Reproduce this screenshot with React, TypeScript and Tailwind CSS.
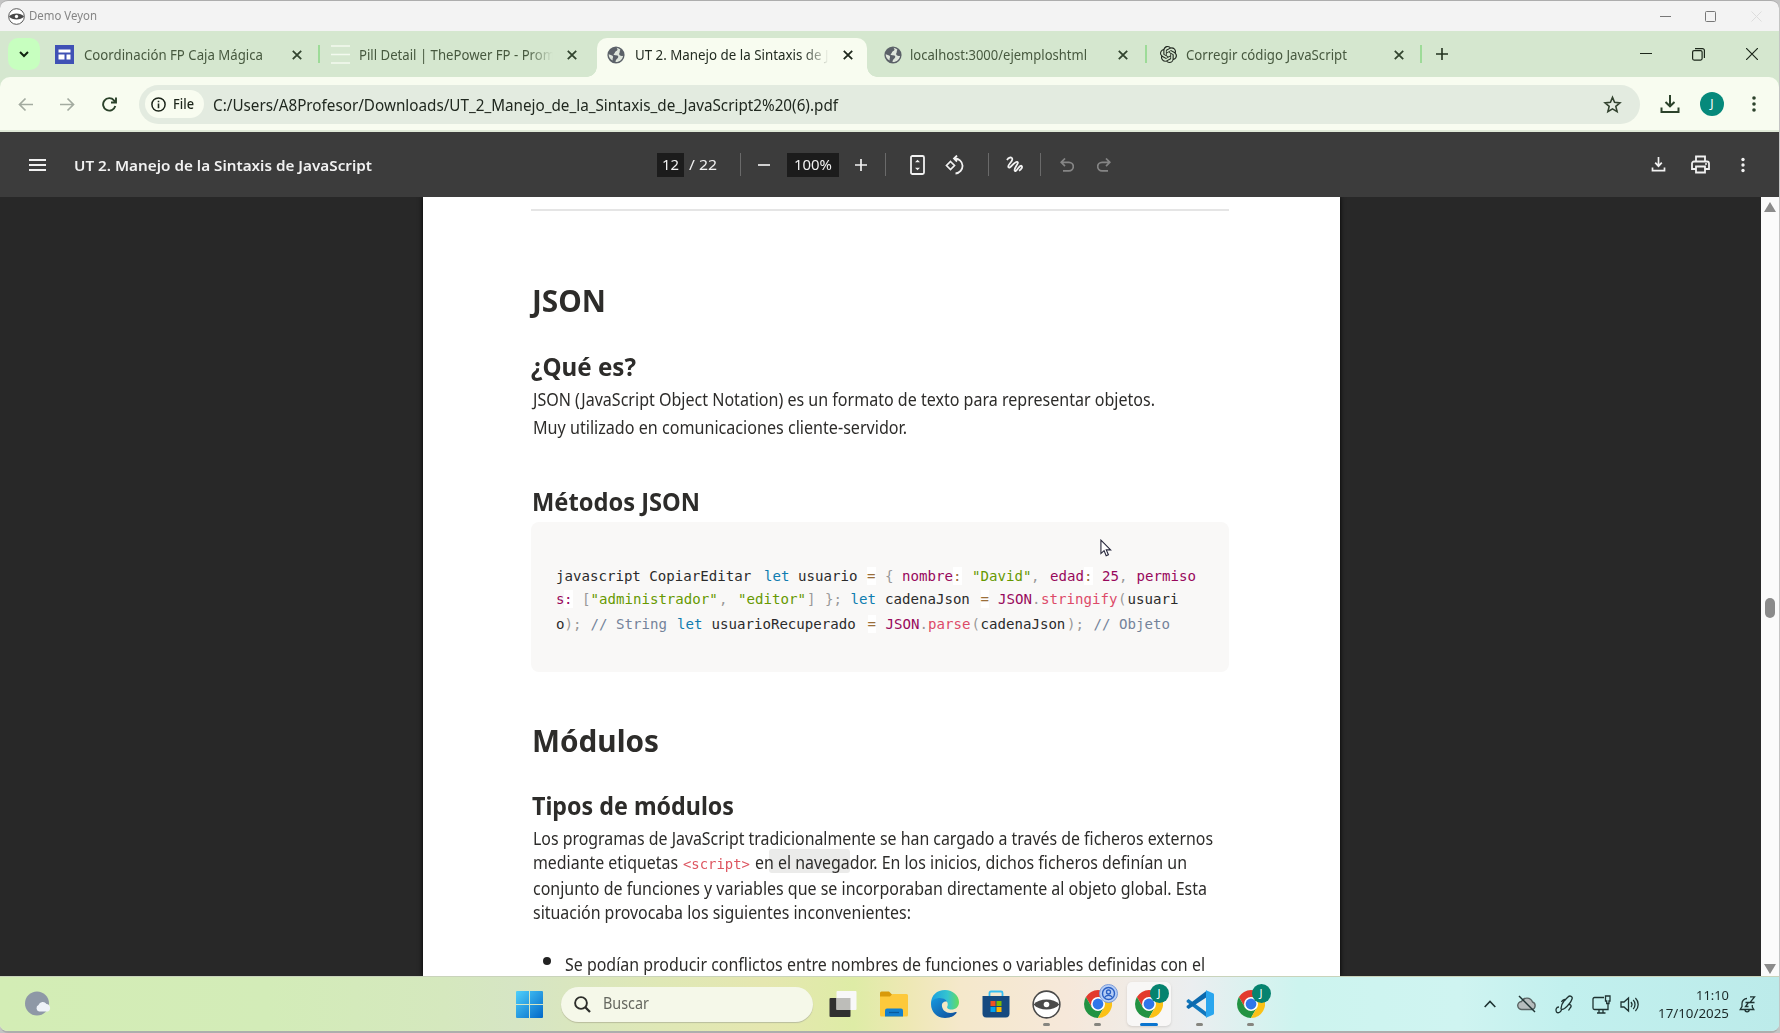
import React, { useLayoutEffect, useRef, useState } from "react";
import { SiOpenai } from "react-icons/si";

type FitProps = { w: number; className?: string; children: React.ReactNode };

/** One line of text stretched or condensed horizontally to a given width. */
function Fit({ w, className = "", children }: FitProps) {
  const ref = useRef<HTMLSpanElement>(null);
  const [k, setK] = useState(1);
  useLayoutEffect(() => {
    if (ref.current && ref.current.offsetWidth) {
      const r = document.createRange();
      r.selectNodeContents(ref.current);
      setK((w / r.getBoundingClientRect().width) * k);
    }
  }, [w]);
  return (
    <span className={`inline-block shrink-0 whitespace-nowrap ${className}`} style={{ width: w }}>
      <span ref={ref} className="inline-block origin-left" style={{ transform: `scaleX(${k})` }}>
        {children}
      </span>
    </span>
  );
}

type IconProps = { className?: string; children: React.ReactNode; box?: string };
function Svg({ className = "size-6", children, box = "0 0 24 24" }: IconProps) {
  return (
    <svg viewBox={box} className={`shrink-0 ${className}`} fill="none" stroke="currentColor" strokeWidth="2">
      {children}
    </svg>
  );
}

const Globe = () => (
  <Svg className="size-[18px]" box="0 0 18 18">
    <circle cx="9" cy="9" r="8.6" fill="#5b6168" stroke="none" />
    <path
      d="M9.500 1.800C11 3 10.800 4.600 9 5.200 7.500 5.700 8.300 7.200 7 7.800 6 8.300 7 9.300 8.500 9.200c2.500-.2 3.500 1.200 2.300 2.900-.9 1.200-2.200 1.700-2.300 3.900 4 .2 7.200-2.600 7.600-6.300-1.800.5-3.600 0-3.900-1.400-.3-1.300.8-1.700.6-2.900-.2-1.100 1-1.300.6-1.700-1.100-1-2.400-1.700-3.900-1.900ZM1.700 8.200c1.700.6 4.200 1 4.400 2.600.1 1.300-1 1.500-.3 3.800C3.300 13.400 1.500 11.200 1.700 8.200Z"
      fill="#dfe6dc"
      stroke="none"
    />
  </Svg>
);

const Veyon = ({ className }: { className: string }) => (
  <Svg className={className} box="0 0 28 28">
    <circle cx="14" cy="14" r="12.900" fill="#fff" stroke="#4a4a4a" strokeWidth="1.500" />
    <path d="M1.500 14C7 7.600 21 7.600 26.500 14 21 20.400 7 20.400 1.500 14Z" fill="#4a4a4a" stroke="none" />
    <circle cx="14" cy="14" r="2.700" fill="#fff" stroke="none" />
  </Svg>
);

const Cross = ({ className = "text-[#32452f]" }: { className?: string }) => (
  <Svg className={`size-[10px] ${className}`} box="0 0 10 10">
    <path d="M.8.800 9.200 9.200M9.200.800.8 9.200" strokeWidth="1.800" />
  </Svg>
);

const Chrome = () => (
  <Svg className="size-7" box="0 0 28 28">
    <g stroke="none">
      <path d="M8 17.500 1.900 7A14 14 0 0 1 26.100 7H14Z" fill="#e33b2e" />
      <path d="M8 17.500 1.900 7a14 14 0 0 0 12 21l6-10.500Z" fill="#229342" />
      <path d="M14 7h12.100A14 14 0 0 1 13.900 28l6.100-10.500Z" fill="#fbc116" />
      <circle cx="14" cy="14" r="7" fill="#fff" />
      <circle cx="14" cy="14" r="5.400" fill="#2f76ea" />
    </g>
  </Svg>
);

type TabProps = { icon: React.ReactNode; title: string; w: number; active?: boolean; sep?: boolean; fade?: boolean };
function Tab({ icon, title, w, active, sep, fade }: TabProps) {
  return (
    <div className="relative flex h-[46px] w-[275.5px] shrink-0 items-center pt-px pl-3">
      {active && (
        <div className="absolute top-[7px] left-[2.500px] h-[39px] w-[270px] rounded-t-[10px] bg-[#f8fcf0]">
          <div className="absolute bottom-0 -left-2.5 size-2.5 bg-[radial-gradient(circle_at_0_0,#d5e7cf_9.500px,#f8fcf0_10px)]" />
          <div className="absolute -right-2.5 bottom-0 size-2.5 bg-[radial-gradient(circle_at_100%_0,#d5e7cf_9.500px,#f8fcf0_10px)]" />
        </div>
      )}
      <div className="relative flex w-7 shrink-0 items-center">{icon}</div>
      <div
        className={`relative w-[196px] overflow-hidden text-[13.500px] leading-6 ${active ? "text-[#222b20]" : "text-[#47593f]"} ${fade ? "[mask-image:linear-gradient(to_right,#000_168px,transparent_194px)]" : ""}`}
      >
        <Fit w={w}>{title}</Fit>
      </div>
      <div className="relative ml-3 flex">
        <Cross className={active ? "text-[#1f281d]" : "text-[#32452f]"} />
      </div>
      {sep && <div className="absolute top-[14px] right-[-1px] h-[18px] w-0.5 bg-[#9ddb98]" />}
    </div>
  );
}

type Seg = [text: string, color: string, x: number, marked?: boolean];
const INK = "text-[#2b2b2b]";
const KEY = "text-[#0f7db0]";
const PROP = "text-[#98085c]";
const STR = "text-[#669900]";
const PUN = "text-[#999999]";
const FN = "text-[#dd4a68]";
const COM = "text-[#74839a]";
const OP = "text-[#9a6e3a]";

const CODE: Seg[][] = [
  [
    ["javascript CopiarEditar", INK, 0],
    ["let", KEY, 208],
    ["usuario", INK, 242],
    ["=", OP, 311, true],
    ["{", PUN, 329],
    ["nombre", PROP, 346],
    [":", OP, 397, true],
    ['"David"', STR, 416],
    [",", PUN, 475],
    ["edad", PROP, 494],
    [":", OP, 528, true],
    ["25", PROP, 546],
    [",", PUN, 563],
    ["permiso", PROP, 580.5],
  ],
  [
    ["s", PROP, 0],
    [":", PROP, 8, true],
    ["[", PUN, 26],
    ['"administrador"', STR, 34.5],
    [",", PUN, 163],
    ['"editor"', STR, 182],
    ["]", PUN, 251],
    ["};", PUN, 269],
    ["let", KEY, 294.5],
    ["cadenaJson", INK, 329],
    ["=", OP, 424.5, true],
    ["JSON", PROP, 442],
    [".", PUN, 476],
    ["stringify", FN, 485],
    ["(", PUN, 562],
    ["usuari", INK, 571.5],
  ],
  [
    ["o", INK, 0],
    [");", PUN, 8.5],
    ["// String", COM, 34.5],
    ["let", KEY, 121],
    ["usuarioRecuperado", INK, 155.5],
    ["=", OP, 311.5, true],
    ["JSON", PROP, 329.5],
    [".", PUN, 363.5],
    ["parse", FN, 372],
    ["(", PUN, 415.5],
    ["cadenaJson", INK, 424.5],
    [");", PUN, 511],
    ["// Objeto", COM, 537.5],
  ],
];

function CodeLine({ segs }: { segs: Seg[] }) {
  return (
    <div className="flex h-[21px] items-center whitespace-pre">
      {segs.map(([text, color, x, marked], i) => (
        <span key={i} className={`shrink-0 ${color}`} style={{ width: (segs[i + 1]?.[2] ?? x + 80) - x }}>
          {marked ? <span className="inline-block h-[18px] bg-white leading-[18px]">{text}</span> : text}
        </span>
      ))}
    </div>
  );
}

const H1 = "flex h-10 items-center text-[31px] leading-10 font-bold";
const H2 = "flex h-8 items-center text-[25px] leading-8 font-bold";
const Divider = ({ className }: { className: string }) => <div className={`h-[23px] w-px shrink-0 bg-[#6a6a6a] ${className}`} />;

function TaskIcon({ children, state }: { children: React.ReactNode; state?: "open" | "active" }) {
  return (
    <div
      className={`relative mx-[3.500px] flex h-11 w-11 items-center justify-center rounded-[5px] ${state === "active" ? "bg-[#f8f7f6] shadow-sm" : ""}`}
    >
      {children}
      {state === "open" && <div className="absolute bottom-0 h-[3.500px] w-[7px] rounded-full bg-[#86857f]" />}
      {state === "active" && <div className="absolute bottom-0 h-[3.500px] w-[18px] rounded-full bg-[#0a74cf]" />}
    </div>
  );
}

const JBadge = () => (
  <div className="absolute top-[2px] right-0.5 flex size-[19px] items-center justify-center rounded-full bg-[#06836f] text-[11px] text-white">
    J
  </div>
);

export default function App() {
  return (
    <div className="h-[1033px] w-[1780px] overflow-hidden bg-[#c4c4c4] font-['Noto_Sans',sans-serif]">
      <div className="flex h-[1033px] w-[1779px] flex-col overflow-hidden rounded-lg border-t border-b-2 border-[#adadad] bg-[#f3f3f3]">
        {/* Outer window title */}
        <div className="flex h-[30px] shrink-0 items-center pl-2 text-[12px] text-[#858585]">
          <Veyon className="size-[17px]" />
          <Fit w={68} className="ml-1">Demo Veyon</Fit>
          <div className="ml-auto flex items-center pr-[17px] text-[#777]">
            <Svg className="size-[11px]" box="0 0 11 11"><path d="M0 5.500H11" strokeWidth="1" /></Svg>
            <Svg className="ml-[34px] size-[11px]" box="0 0 11 11"><rect x=".5" y=".5" width="10" height="10" rx="1" strokeWidth="1" /></Svg>
            <Svg className="ml-[35px] size-[11px] text-[#ddd]" box="0 0 11 11"><path d="M.5.500l10 10M10.500.500l-10 10" strokeWidth="1" /></Svg>
          </div>
        </div>

        {/* Tab strip */}
        <div className="flex h-[46px] shrink-0 items-center bg-[#d5e7cf]">
          <div className="mr-[3.500px] ml-2 flex h-8 w-8 items-center justify-center rounded-[10px] bg-[#c7ffbf]">
            <Svg className="size-[10px] text-[#10240f]" box="0 0 10 10"><path d="M1 3l4 4 4-4" strokeWidth="2" /></Svg>
          </div>
          <Tab
            title="Coordinación FP Caja Mágica"
            w={179}
            sep
            icon={
              <Svg className="-ml-px size-[19px]" box="0 0 19 19">
                <rect width="19" height="19" fill="#3f51b5" stroke="none" />
                <path d="M3.500 4.500h12v3h-12zM3.500 9.500h6v5h-6zM11.500 9.500h4v5h-4z" fill="#fff" stroke="none" />
              </Svg>
            }
          />
          <Tab
            title="Pill Detail | ThePower FP - Promo"
            w={204}
            fade
            icon={<Svg className="size-[19px] text-[#f3faef]" box="0 0 19 19"><path d="M0 1H19M0 9.500H19M0 18H19" strokeWidth="1.300" /></Svg>}
          />
          <Tab title="UT 2. Manejo de la Sintaxis de JavaScript" w={251} fade active icon={<Globe />} />
          <Tab title="localhost:3000/ejemploshtml" w={177} sep icon={<div className="ml-0.5"><Globe /></div>} />
          <Tab title="Corregir código JavaScript" w={161} sep icon={<SiOpenai className="ml-0.5 size-[17px] text-[#20281f]" />} />
          <Svg className="ml-[15px] size-3 text-[#22331f]" box="0 0 12 12"><path d="M6 0V12M0 6H12" strokeWidth="1.600" /></Svg>
          <div className="ml-auto flex items-center pr-[21px] text-[#1d281b]">
            <Svg className="size-3" box="0 0 12 12"><path d="M0 5.500H12" strokeWidth="1.200" /></Svg>
            <Svg className="ml-[40px] size-[13px]" box="0 0 13 13">
              <rect x=".6" y="2.600" width="9.500" height="9.500" rx="1.500" strokeWidth="1.200" />
              <path d="M3 .600h7.400a2 2 0 0 1 2 2V10" strokeWidth="1.200" />
            </Svg>
            <Svg className="ml-[41px] size-3" box="0 0 12 12"><path d="M0 0 12 12M12 0 0 12" strokeWidth="1.200" /></Svg>
          </div>
        </div>

        {/* Address bar */}
        <div className="h-[55px] shrink-0 bg-[#d5e7cf]">
          <div className="flex h-[55px] items-center rounded-t-[10px] border-b-2 border-[#e0ead8] bg-[#f8fcf0] pt-px">
            <Svg className="ml-[18px] size-[15px] text-[#a3aba0]" box="0 0 15 15"><path d="M15 7.500H1.500M7.500 1.500 1.500 7.500 7.500 13.500" strokeWidth="1.700" /></Svg>
            <Svg className="ml-[27px] size-[15px] text-[#a3aba0]" box="0 0 15 15"><path d="M0 7.500H13.500M7.500 1.500l6 6L7.500 13.500" strokeWidth="1.700" /></Svg>
            <Svg className="ml-[27px] size-[15px] text-[#2b422a]" box="0 0 15 15"><path d="M13.300 9A6.200 6.200 0 1 1 12 3.300L14 5.500M14 .5V5.500H9" strokeWidth="1.900" /></Svg>
            <div className="ml-[22px] flex h-[39px] w-[1501px] items-center rounded-full bg-[#e3ebe0] pl-1.5">
              <div className="flex h-7 w-[59px] items-center rounded-full bg-[#f8fcf0] pl-1.5 text-[13.500px] font-medium text-[#1d261b]">
                <Svg className="size-[15px]" box="0 0 15 15"><circle cx="7.500" cy="7.500" r="6.600" strokeWidth="1.500" /><path d="M7.500 6.500V11.200M7.500 3.700V5.300" strokeWidth="1.600" /></Svg>
                <Fit w={21} className="ml-[7px]">File</Fit>
              </div>
              <Fit w={625} className="ml-[9px] pt-px text-[16.500px] leading-7 text-[#20281f]">
                C:/Users/A8Profesor/Downloads/UT_2_Manejo_de_la_Sintaxis_de_JavaScript2%20(6).pdf
              </Fit>
              <Svg className="mr-[18px] ml-auto size-[19px] text-[#33432f]" box="0 0 24 24">
                <path d="M12 3l2.600 6.300 6.800.6-5.200 4.500 1.600 6.600L12 17.500 6.200 21l1.600-6.600L2.600 9.900l6.800-.6Z" strokeWidth="2" />
              </Svg>
            </div>
            <Svg className="ml-5 size-[20px] text-[#2c422b]" box="0 0 20 20"><path d="M10 1V12M5.500 8 10 12.300l4.500-4.300M1.500 13.500V18H18.500V13.500" strokeWidth="2" /></Svg>
            <div className="ml-5 flex size-6 items-center justify-center rounded-full bg-[#06897b] text-[12px] text-white">J</div>
            <Svg className="ml-[20px] size-5 text-[#2c422b]" box="0 0 20 20">
              <g fill="currentColor" stroke="none"><circle cx="10" cy="4" r="1.800" /><circle cx="10" cy="10" r="1.800" /><circle cx="10" cy="16" r="1.800" /></g>
            </Svg>
          </div>
        </div>

        {/* PDF toolbar */}
        <div className="flex h-[65px] shrink-0 items-center bg-[#3c3c3c] text-[#f1f1f1]">
          <Svg className="ml-[29px] h-3 w-[17px]" box="0 0 17 12"><path d="M0 1H17M0 6H17M0 11H17" strokeWidth="1.800" /></Svg>
          <Fit w={298} className="ml-7 pt-px text-[15px] font-semibold">UT 2. Manejo de la Sintaxis de JavaScript</Fit>
          <div className="ml-[285px] flex h-6 w-[27px] items-center justify-center bg-[#1c1c1c] text-[14.500px]"><Fit w={17}>12</Fit></div>
          <Fit w={28} className="ml-[5px] text-[14.500px]">/ 22</Fit>
          <Divider className="ml-[23px]" />
          <Svg className="ml-[17px] size-3 text-[#d0d0d0]" box="0 0 12 12"><path d="M0 6H12" strokeWidth="2" /></Svg>
          <div className="ml-[17px] flex h-6 w-[52px] items-center justify-center bg-[#1c1c1c] text-[14.500px]"><Fit w={38}>100%</Fit></div>
          <Svg className="ml-4 size-3" box="0 0 12 12"><path d="M0 6H12M6 0V12" strokeWidth="1.700" /></Svg>
          <Divider className="ml-[18px]" />
          <Svg className="ml-[24px] h-5 w-[15px]" box="0 0 15 20">
            <rect x="1" y="1" width="13" height="18" rx="1.500" strokeWidth="1.800" />
            <path d="M5 7.300 7.500 4.700l2.500 2.600ZM5 12.700l2.500 2.600 2.500-2.600Z" fill="currentColor" stroke="none" />
          </Svg>
          <Svg className="ml-[20px] size-5" box="0 0 20 20">
            <path d="M5.500 6.500 9.500 10.500 5.500 14.500 1.500 10.500Z" strokeWidth="1.700" />
            <path d="M9.500 3.500a7.500 7.500 0 1 1 1 15M12 .5 9 3.500 12 6.500" strokeWidth="1.800" />
          </Svg>
          <Divider className="ml-[23px]" />
          <Svg className="ml-[17px] size-[18px]" box="0 0 18 18">
            <path d="M1 4C2.500 1 6.500.5 6.300 3.500 6 6.500 1 9 2.500 11.300 4 13.500 8 5.500 11 5.800c3.200.6-3.500 6.200-2.300 8.700C10 17 13 9 15.300 9.800c2 1-.3 3.800-2.300 5" strokeWidth="1.800" />
          </Svg>
          <Divider className="ml-[16px]" />
          <Svg className="ml-[19px] size-[14px] text-[#858585]" box="0 0 14 14"><path d="M5 .5 1.200 4.300 5 8.100M1.500 4.300H9A4.300 4.300 0 0 1 9 12.900H3" strokeWidth="1.700" /></Svg>
          <Svg className="ml-[23px] size-[14px] text-[#858585]" box="0 0 14 14"><path d="M9 .5l3.800 3.800L9 8.100M12.500 4.300H5A4.300 4.300 0 0 0 5 12.900H11" strokeWidth="1.700" /></Svg>
          <Svg className="ml-auto size-[15px]" box="0 0 15 15"><path d="M7.500 0V9M4.200 5.700 7.500 9.200 10.800 5.700M1.500 10.500V13.700H13.500V10.500" strokeWidth="1.700" /></Svg>
          <Svg className="ml-[25px] size-[19px]" box="0 0 19 19">
            <path d="M5 6V1.500h9V6M5 14H1V8.500A2 2 0 0 1 3 6.500H16a2 2 0 0 1 2 2V14H14M5 11.500h9v6H5Z" strokeWidth="1.800" />
            <circle cx="15" cy="9" r="1" fill="currentColor" stroke="none" />
          </Svg>
          <Svg className="mr-[26px] ml-[23px] size-5" box="0 0 20 20">
            <g fill="currentColor" stroke="none"><circle cx="10" cy="4.500" r="1.700" /><circle cx="10" cy="10" r="1.700" /><circle cx="10" cy="15.500" r="1.700" /></g>
          </Svg>
        </div>

        {/* Document */}
        <div className="relative flex h-[779px] shrink-0 overflow-hidden bg-[#282828]">
          <div className="ml-[423px] h-[779px] w-[917px] shrink-0 overflow-hidden bg-white pl-[108px] text-[17.500px] text-[#2d2c2a] shadow-[0_0_5px_#000]">
            <div className="mt-3 h-0.5 w-[698px] bg-[#e5e5e5]" />
            <h1 className={`mt-[69px] pl-px ${H1}`}><Fit w={74}>JSON</Fit></h1>
            <h2 className={`mt-[30px] ${H2}`}><Fit w={105}>¿Qué es?</Fit></h2>
            <p className="mt-[3px] -mb-px flex flex-col pl-0.5 leading-7">
              <Fit w={622}>JSON (JavaScript Object Notation) es un formato de texto para representar objetos.</Fit>
              <Fit w={374}>Muy utilizado en comunicaciones cliente-servidor.</Fit>
            </p>
            <h2 className={`mt-[45px] pl-px ${H2}`}><Fit w={168}>Métodos JSON</Fit></h2>
            <div className="mt-[5px] flex h-[150px] w-[698px] flex-col rounded-lg bg-[#f9f8f7] pt-[44px] pl-[25px] font-['DejaVu_Sans_Mono',monospace] text-[14.100px]">
              <CodeLine segs={CODE[0]} />
              <div className="h-[2px]" />
              <CodeLine segs={CODE[1]} />
              <div className="h-1" />
              <CodeLine segs={CODE[2]} />
            </div>
            <h1 className={`mt-12 pl-px ${H1}`}><Fit w={127}>Módulos</Fit></h1>
            <h2 className={`mt-[29px] pl-px ${H2}`}><Fit w={202}>Tipos de módulos</Fit></h2>
            <div className="mt-[5px] pl-0.5 leading-[25px]">
              <div className="flex h-6"><Fit w={680}>Los programas de JavaScript tradicionalmente se han cargado a través de ficheros externos</Fit></div>
              <div className="relative flex h-[26px]">
                <div className="absolute -top-px left-[236px] h-[24px] w-[81px] rounded-[3px] bg-[#ebebea]" />
                <Fit w={145}>mediante etiquetas</Fit>
                <Fit w={67} className="ml-[5px] pt-0.5 font-['DejaVu_Sans_Mono',monospace] text-[13.500px] text-[#dd5560]">&lt;script&gt;</Fit>
                <Fit w={432} className="relative ml-[5px]">en el navegador. En los inicios, dichos ficheros definían un</Fit>
              </div>
              <div className="flex h-6"><Fit w={674}>conjunto de funciones y variables que se incorporaban directamente al objeto global. Esta</Fit></div>
              <div className="flex h-[25px]"><Fit w={378}>situación provocaba los siguientes inconvenientes:</Fit></div>
              <div className="mt-[27px] flex h-[25px]">
                <div className="mt-[5px] ml-[10px] size-[8px] rounded-full bg-[#222]" />
                <Fit w={640} className="ml-[14px]">Se podían producir conflictos entre nombres de funciones o variables definidas con el</Fit>
              </div>
            </div>
          </div>
          <div className="ml-auto flex w-[18px] shrink-0 flex-col items-center justify-between bg-[#fbfbfb] py-[5px]">
            <Svg className="h-[10px] w-3" box="0 0 12 10"><path d="M6 0 12 10H0Z" fill="#8b8b8b" stroke="none" /></Svg>
            <div className="mt-[40px] h-5 w-[10px] rounded-full bg-[#8b8b8b]" />
            <Svg className="-mb-[3px] h-[10px] w-3" box="0 0 12 10"><path d="M6 10 12 0H0Z" fill="#8b8b8b" stroke="none" /></Svg>
          </div>
          <Svg className="absolute top-[342px] left-[1100px] h-[18px] w-3" box="0 0 13 19">
            <path d="M1 1V15.500l3.400-3.200 2.300 5.500 2.400-1-2.300-5.300H11.500Z" fill="#fff" stroke="#25253a" strokeWidth="1.200" />
          </Svg>
        </div>

        {/* Taskbar */}
        <div className="flex h-[55px] shrink-0 items-center border-t border-[#c9d3bb] bg-[linear-gradient(90deg,#d3edb5_0%,#d3ecb8_15%,#d5e8be_25%,#d6e5c4_29%,#dfe8b6_37%,#e5e7b0_43%,#deeca6_48%,#eee8b4_51%,#f5e8cb_54%,#f6e8da_60%,#ebeef0_67%,#cdf4ef_73%,#cff4f1_82%,#c2f0ee_88%,#bcebea_100%)]">
          <Svg className="ml-[24px] size-7" box="0 0 28 28">
            <circle cx="13" cy="13.500" r="12" fill="#8e98a6" stroke="none" />
            <path d="M15 21.500a3.500 3.500 0 0 1-.5-6.500 4.500 4.500 0 0 1 8-1 4 4 0 0 1 1.500 7.500Z" fill="#eef2f8" stroke="none" />
          </Svg>
          <Svg className="ml-[464px] size-[27px]" box="0 0 27 27">
            <defs><linearGradient id="win" x1="0" y1="0" x2="1" y2="1"><stop stopColor="#4fd0fb" /><stop offset="1" stopColor="#0268c8" /></linearGradient></defs>
            <path d="M0 1a1 1 0 0 1 1-1H13V13H0ZM14 0H26a1 1 0 0 1 1 1V13H14ZM0 14H13V27H1a1 1 0 0 1-1-1ZM14 14H27V26a1 1 0 0 1-1 1H14Z" fill="url(#win)" stroke="none" />
          </Svg>
          <div className="ml-[18px] flex h-[35px] w-[252px] items-center rounded-full bg-[#f5f8e9] pl-[13px] text-[15.500px] text-[#65675f] shadow-[0_1px_1px_#b9bd9d]">
            <Svg className="size-[17px] text-[#2c2d2a]" box="0 0 17 17"><circle cx="7" cy="7" r="5.900" strokeWidth="1.900" /><path d="M11.300 11.300 16 16" strokeWidth="2.300" /></Svg>
            <Fit w={46} className="ml-3">Buscar</Fit>
          </div>
          <div className="ml-[4px] flex">
            <TaskIcon>
              <Svg className="size-[28px]" box="0 0 28 28">
                <rect x="0.500" y="8" width="21" height="19" rx="1" fill="#303030" stroke="none" />
                <rect x="7.500" y="1" width="20" height="19" rx="1" fill="#f8f8f8" stroke="none" />
                <rect x="7.500" y="8" width="14" height="12" fill="#bdbdb9" stroke="none" />
              </Svg>
            </TaskIcon>
            <TaskIcon>
              <Svg className="size-[28px]" box="0 0 28 28">
                <path d="M0 3a1.500 1.500 0 0 1 1.500-1.500H9L12 4.500V9H0Z" fill="#d89a0b" stroke="none" />
                <path d="M0 6.500H10L12.500 4H26.500A1.500 1.500 0 0 1 28 5.500V25a1.500 1.500 0 0 1-1.500 1.500H1.500A1.500 1.500 0 0 1 0 25Z" fill="#fdc93b" stroke="none" />
                <path d="M5 26.500V20.500a2 2 0 0 1 2-2H21a2 2 0 0 1 2 2v6Z" fill="#1280ce" stroke="none" />
                <path d="M9 22.500H19" stroke="#075a9c" strokeWidth="1.300" />
              </Svg>
            </TaskIcon>
            <TaskIcon>
              <Svg className="size-[28px]" box="0 0 28 28">
                <defs>
                  <linearGradient id="edgeTop" x1="0" x2="1"><stop stopColor="#1b9fe0" /><stop offset=".6" stopColor="#35c5cf" /><stop offset="1" stopColor="#65dc5c" /></linearGradient>
                  <linearGradient id="edgeLow" x1="0" y1="0" x2="1" y2="1"><stop stopColor="#1699e0" /><stop offset="1" stopColor="#104b97" /></linearGradient>
                </defs>
                <path d="M0 14C0 5 6 0 14 0s14 6 14 12c0 5-3.500 7.500-7.500 7.500-3.500 0-5-1.500-4.200-3 1.800-3.500-1.300-8-6.300-8C5 8.500 1 11 0 14Z" fill="url(#edgeTop)" stroke="none" />
                <path d="M0 14c0-4 4.500-6 9-6 3.500 0 6 1.500 7 3.500-4-.5-5.500 2-5 5 .8 5 6 8 13.500 5.500.8-.2 1.500.3 1 1C23.500 26 19 28 14 28 6 28 0 22 0 14Z" fill="url(#edgeLow)" stroke="none" />
              </Svg>
            </TaskIcon>
            <TaskIcon>
              <Svg className="size-[28px]" box="0 0 28 28">
                <path d="M7.500 6.500V3a1.500 1.500 0 0 1 1.500-1.500H19A1.500 1.500 0 0 1 20.500 3V6.500" stroke="#35bdf2" strokeWidth="1.800" />
                <path d="M.5 6H27.500V23.500a4 4 0 0 1-4 4H4.500a4 4 0 0 1-4-4Z" fill="#164a80" stroke="none" />
                <g stroke="none"><path d="M8.500 11h5v5h-5z" fill="#f25022" /><path d="M14.500 11h5v5h-5z" fill="#7fba00" /><path d="M8.500 17h5v5h-5z" fill="#00a4ef" /><path d="M14.500 17h5v5h-5z" fill="#ffb900" /></g>
              </Svg>
            </TaskIcon>
            <TaskIcon state="open"><Veyon className="size-[29px]" /></TaskIcon>
            <TaskIcon state="open">
              <Chrome />
              <Svg className="absolute top-[2px] right-0.5 size-[19px]" box="0 0 19 19">
                <circle cx="9.500" cy="9.500" r="9" fill="#b5cdf5" stroke="#7b9bd8" strokeWidth="1" />
                <circle cx="9.500" cy="9.500" r="6" stroke="#2a5fc4" strokeWidth="1.400" />
                <circle cx="9.500" cy="8" r="2" stroke="#2a5fc4" strokeWidth="1.300" />
                <path d="M5.500 13.500c2-3 6-3 8 0" stroke="#2a5fc4" strokeWidth="1.300" />
              </Svg>
            </TaskIcon>
            <TaskIcon state="active"><Chrome /><JBadge /></TaskIcon>
            <TaskIcon state="open">
              <Svg className="size-[28px]" box="0 0 28 28">
                <path d="M.6 10.600 2.600 8.900 21 22.500V27.500L.6 12Z" fill="#1177bd" stroke="none" />
                <path d="M.6 17.400 2.600 19.100 21 7V.5L.6 16Z" fill="#0b69ae" stroke="none" />
                <path d="M20 .300 27 3.300a1.500 1.500 0 0 1 1 1.400V23.300a1.500 1.500 0 0 1-1 1.400L20 27.700Z" fill="#2aa6ee" stroke="none" />
              </Svg>
            </TaskIcon>
            <TaskIcon state="open"><Chrome /><JBadge /></TaskIcon>
          </div>
          <div className="ml-auto flex items-center pr-[23px] text-[#1e3332]">
            <Svg className="h-2 w-3" box="0 0 12 8"><path d="M.7 7 6 1.500 11.300 7" strokeWidth="1.600" /></Svg>
            <Svg className="ml-[21px] size-5" box="0 0 20 20">
              <path d="M5 15.500a4 4 0 0 1-.5-8A6 6 0 0 1 15.500 8a3.900 3.900 0 0 1-.5 7.500Z" fill="#b5bcbc" stroke="#596463" strokeWidth="1.400" />
              <path d="M2 2 18 18" strokeWidth="1.500" />
            </Svg>
            <Svg className="ml-[18px] size-[19px]" box="0 0 19 19">
              <path d="M6 13.500C6 11 7 8.500 9 6L13 2C15 0 18 1.500 17 4 16 7 12 11.500 9.500 13.500 8 14.500 6 15 6 13.500ZM10 5.500C11 4 7.500 4 6.500 7M13 9.500c2.500-.5 4 1 2.500 3L13.500 15.500M4 12C1 12 .5 15 1.500 17c1.500 1.500 4 .5 5-2" strokeWidth="1.300" />
            </Svg>
            <Svg className="ml-[18px] size-[19px]" box="0 0 19 19">
              <path d="M12 2.500H2.500a1.500 1.500 0 0 0-1.500 1.500V13a1.500 1.500 0 0 0 1.500 1.500H16V9M5 18H13.500M7 14.500V18M11 14.500V18M13.500 1h4.500V6h-1V8.500H14.700V6H13.500Z" strokeWidth="1.300" />
            </Svg>
            <Svg className="ml-[9px] size-[19px]" box="0 0 19 19">
              <path d="M1 7V12H4L8.500 16V3L4 7ZM11 7a4 4 0 0 1 0 5M13.200 5a6.500 6.500 0 0 1 0 9M15.400 3a9 9 0 0 1 0 13" strokeWidth="1.300" />
            </Svg>
            <div className="ml-[19px] flex flex-col items-end text-[13px] leading-[18.500px] text-[#1c2a29]">
              <Fit w={33}>11:10</Fit>
              <Fit w={71}>17/10/2025</Fit>
            </div>
            <Svg className="ml-[10px] size-[17px]" box="0 0 17 17">
              <path d="M8 2.500A5 5 0 0 0 3 7.500V10.500L1.200 13.500H14.800L13.300 11V9M6 13.700a2.100 2.100 0 0 0 4.200 0" strokeWidth="1.300" />
              <path d="M6.500 6.500H9.500L6.500 10.500H9.500M11 .8H15.500L11 6.500H15.500" strokeWidth="1.300" />
            </Svg>
          </div>
        </div>
      </div>
    </div>
  );
}
